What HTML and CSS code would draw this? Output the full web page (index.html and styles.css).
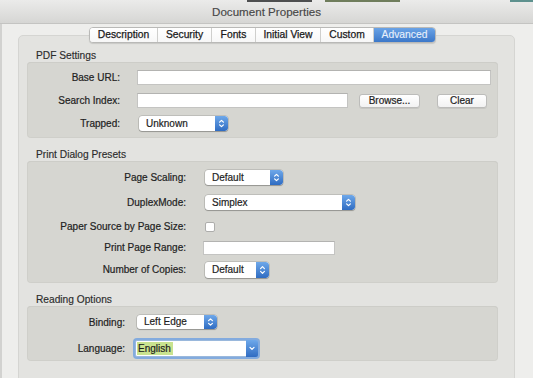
FILE: index.html
```html
<!DOCTYPE html>
<html>
<head>
<meta charset="utf-8">
<link rel="stylesheet" href="styles.css">
</head>
<body>
<div class="window">
  <div class="titlebar">
    <div class="backdrop">
      <span class="bd bd-clear1"></span><span class="bd bd-dark"></span><span class="bd bd-clear2"></span><span class="bd bd-green"></span><span class="bd bd-clear3"></span><span class="bd bd-teal"></span>
    </div>
    <div class="title">Document Properties</div>
  </div>
  <div class="content">
    <div class="tabs">
      <div class="seg seg-desc">Description</div>
      <div class="seg seg-sec">Security</div>
      <div class="seg seg-fonts">Fonts</div>
      <div class="seg seg-init">Initial View</div>
      <div class="seg seg-custom">Custom</div>
      <div class="seg seg-adv active">Advanced</div>
    </div>
    <div class="panel">
      <div class="sec-title first">PDF Settings</div>
      <div class="section s1">
        <div class="row r15">
          <div class="label l1">Base URL:</div>
          <div class="input in-base"></div>
        </div>
        <div class="row r15">
          <div class="label l1">Search Index:</div>
          <div class="input in-search"></div>
          <div class="button btn-browse">Browse...</div>
          <div class="button btn-clear">Clear</div>
        </div>
        <div class="row r15">
          <div class="label l1">Trapped:</div>
          <div class="select sel-trapped"><span class="sel-text">Unknown</span><span class="stepper"><svg width="13" height="15" viewBox="0 0 13 15"><path d="M4.6 6.2 L6.5 4.3 L8.4 6.2 M4.6 8.8 L6.5 10.7 L8.4 8.8" fill="none" stroke="#fff" stroke-width="1.2" stroke-linecap="round" stroke-linejoin="round"/></svg></span></div>
        </div>
      </div>

      <div class="sec-title">Print Dialog Presets</div>
      <div class="section s2">
        <div class="row h25">
          <div class="label l2">Page Scaling:</div>
          <div class="select sel-scaling"><span class="sel-text">Default</span><span class="stepper"><svg width="13" height="15" viewBox="0 0 13 15"><path d="M4.6 6.2 L6.5 4.3 L8.4 6.2 M4.6 8.8 L6.5 10.7 L8.4 8.8" fill="none" stroke="#fff" stroke-width="1.2" stroke-linecap="round" stroke-linejoin="round"/></svg></span></div>
        </div>
        <div class="row h25">
          <div class="label l2">DuplexMode:</div>
          <div class="select sel-duplex"><span class="sel-text">Simplex</span><span class="stepper"><svg width="13" height="15" viewBox="0 0 13 15"><path d="M4.6 6.2 L6.5 4.3 L8.4 6.2 M4.6 8.8 L6.5 10.7 L8.4 8.8" fill="none" stroke="#fff" stroke-width="1.2" stroke-linecap="round" stroke-linejoin="round"/></svg></span></div>
        </div>
        <div class="row h23">
          <div class="label l2">Paper Source by Page Size:</div>
          <div class="checkbox"></div>
        </div>
        <div class="row h19">
          <div class="label l2">Print Page Range:</div>
          <div class="input in-range"></div>
        </div>
        <div class="row h25">
          <div class="label l2">Number of Copies:</div>
          <div class="select sel-copies"><span class="sel-text">Default</span><span class="stepper"><svg width="13" height="16" viewBox="0 0 13 16"><path d="M4.6 6.6 L6.5 4.7 L8.4 6.6 M4.6 9.4 L6.5 11.3 L8.4 9.4" fill="none" stroke="#fff" stroke-width="1.2" stroke-linecap="round" stroke-linejoin="round"/></svg></span></div>
        </div>
      </div>

      <div class="sec-title">Reading Options</div>
      <div class="section s3">
        <div class="row r16">
          <div class="label l3">Binding:</div>
          <div class="select sel-binding"><span class="sel-text">Left Edge</span><span class="stepper"><svg width="13" height="14" viewBox="0 0 13 14"><path d="M4.6 5.7 L6.5 3.8 L8.4 5.7 M4.6 8.3 L6.5 10.2 L8.4 8.3" fill="none" stroke="#fff" stroke-width="1.2" stroke-linecap="round" stroke-linejoin="round"/></svg></span></div>
        </div>
        <div class="row r20">
          <div class="label l3">Language:</div>
          <div class="combo"><span class="combo-text"><span class="hl">English</span></span><span class="combo-btn"><svg width="12" height="17" viewBox="0 0 12 17"><path d="M4 7.4 L6 9.4 L8 7.4" fill="none" stroke="#fff" stroke-width="1.3" stroke-linecap="round" stroke-linejoin="round"/></svg></span></div>
        </div>
      </div>
    </div>
  </div>
</div>
</body>
</html>
```
FILE: styles.css
```css
* { box-sizing: border-box; }
html, body { margin: 0; padding: 0; }
body {
  width: 533px;
  height: 378px;
  overflow: hidden;
  background: #ededeb;
  font-family: "Liberation Sans", Arial, sans-serif;
  color: #262626;
}
.window {
  width: 533px;
  height: 378px;
  display: flex;
  flex-direction: column;
  overflow: hidden;
}
.titlebar {
  position: relative;
  height: 24px;
  flex: none;
  background: linear-gradient(#ebebea, #d6d6d4);
  border-bottom: 1px solid #c4c4c2;
  display: flex;
  align-items: center;
  justify-content: center;
}
.backdrop {
  position: absolute;
  left: 0;
  top: 0;
  width: 533px;
  height: 2px;
  display: flex;
}
.bd { height: 2px; display: block; }
.bd-clear1 { width: 247px; }
.bd-dark { width: 65px; background: #4e4f50; }
.bd-clear2 { width: 13px; }
.bd-green { width: 75px; background: #6f7d5c; }
.bd-clear3 { width: 110px; }
.bd-teal { width: 23px; background: #5e918e; }
.title {
  font-size: 11.6px;
  color: #474747;
  line-height: 14px;
  margin-top: 1px;
  -webkit-text-stroke: 0.15px #474747;
}
.content {
  flex: 1;
  min-height: 0;
  background: #eeeeec;
  box-shadow: inset 2px 0 0 #d2d2d0;
  display: flex;
  flex-direction: column;
}
.tabs {
  position: relative;
  z-index: 1;
  margin-top: 3px;
  margin-left: 89px;
  width: 347px;
  height: 16px;
  flex: none;
  display: flex;
  background: #fff;
  border: 1px solid #b9b9b7;
  border-radius: 4px;
  box-shadow: 0 1px 1px rgba(0,0,0,0.12);
  overflow: hidden;
}
.seg {
  font-size: 10.3px;
  line-height: 14px;
  text-align: center;
  color: #1a1a1a;
  -webkit-text-stroke: 0.25px #1a1a1a;
  border-right: 1px solid #cfcfcd;
  background: linear-gradient(#ffffff, #f7f7f7);
}
.seg-desc { width: 68px; }
.seg-sec { width: 54px; }
.seg-fonts { width: 44px; }
.seg-init { width: 65px; }
.seg-custom { width: 53px; }
.seg-adv { flex: 1; border-right: none; }
.seg.active {
  background: linear-gradient(#6aa3e6, #3c78c9);
  color: #e9f1fb;
  -webkit-text-stroke: 0.1px #e9f1fb;
}
.panel {
  margin: -8px 18px 0 18px;
  flex: none;
  height: 400px;
  background: #e3e3e0;
  border: 1px solid #d5d5d2;
  border-radius: 5px;
  padding: 13px 16px 0 8px;
}
.sec-title {
  font-size: 10.2px;
  line-height: 13px;
  padding-left: 9px;
  color: #2c2c2c;
  -webkit-text-stroke: 0.15px #2c2c2c;
  margin-top: 10px;
}
.sec-title.first { margin-top: 0; }
.section {
  background: #d6d6d1;
  border-radius: 4px;
  box-shadow: inset 0 1px 0 #cdcdc8, inset 0 0 0 1px rgba(0,0,0,0.03);
  display: flex;
  flex-direction: column;
}
.s1 { padding: 8px 0 7px 0; gap: 8px; }
.s2 { padding: 4px 0 1px 0; }
.s3 { padding: 8px 0 3px 0; gap: 8px; }
.row { display: flex; align-items: center; }
.r15 { height: 15px; }
.r16 { height: 16px; }
.r20 { height: 20px; }
.h25 { height: 25px; }
.h23 { height: 23px; }
.h19 { height: 19px; }
.label {
  font-size: 10px;
  text-align: right;
  flex: none;
  color: #222;
  -webkit-text-stroke: 0.2px #222;
  white-space: nowrap;
}
.l1 { width: 93px; }
.l2 { width: 159px; }
.l3 { width: 98px; }
.input {
  height: 15px;
  background: #fff;
  border: 1px solid #c4c4c2;
  border-top-color: #b3b3b1;
  flex: none;
}
.in-base { margin-left: 17px; width: 354px; }
.in-search { margin-left: 17px; width: 211px; }
.in-range { margin-left: 17px; width: 132px; height: 14px; }
.button {
  height: 14px;
  font-size: 10px;
  line-height: 12px;
  text-align: center;
  color: #222;
  -webkit-text-stroke: 0.2px #222;
  background: linear-gradient(#ffffff, #f2f2f2);
  border: 1px solid #bcbcba;
  border-radius: 3px;
  box-shadow: 0 1px 0 rgba(0,0,0,0.07);
  flex: none;
}
.btn-browse { margin-left: 11px; width: 61px; }
.btn-clear { margin-left: 17px; width: 50px; }
.select {
  display: flex;
  flex: none;
  height: 15px;
  background: #fff;
  border-radius: 3px;
  box-shadow: 0 0 0 0.5px rgba(0,0,0,0.22), 0 1px 1px rgba(0,0,0,0.22);
  overflow: hidden;
}
.sel-text {
  flex: 1;
  font-size: 10px;
  line-height: 15px;
  padding-left: 7px;
  color: #1e1e1e;
  -webkit-text-stroke: 0.2px #1e1e1e;
}
.stepper {
  width: 13px;
  flex: none;
  display: flex;
  align-items: center;
  justify-content: center;
  background: linear-gradient(#6ea8ea, #2f6cc2);
  border-radius: 0 3px 3px 0;
}
.stepper svg { display: block; }
.sel-trapped { margin-left: 19px; width: 89px; }
.sel-scaling { margin-left: 19px; width: 78px; }
.sel-duplex { margin-left: 19px; width: 150px; }
.sel-copies { margin-left: 19px; width: 64px; height: 16px; }
.sel-copies .sel-text { line-height: 16px; }
.sel-binding { margin-left: 12px; width: 80px; height: 14px; }
.sel-binding .sel-text { line-height: 14px; }
.checkbox {
  margin-left: 19px;
  width: 10px;
  height: 10px;
  background: #fff;
  border: 1px solid #adadab;
  border-radius: 2px;
  flex: none;
}
.combo {
  margin-left: 10px;
  width: 123px;
  height: 17px;
  display: flex;
  flex: none;
  background: #fff;
  border: 1px solid #9ab8dc;
  border-radius: 2px;
  box-shadow: 0 0 0 2px rgba(110,160,225,0.8);
}
.combo-text {
  flex: 1;
  font-size: 10px;
  line-height: 15px;
  padding-left: 1px;
  color: #1e1e1e;
  -webkit-text-stroke: 0.2px #1e1e1e;
}
.hl {
  background: #c9e38f;
  padding: 1px 2px 1px 1px;
}
.combo-btn {
  width: 12px;
  flex: none;
  margin: -1px -1px -1px 0;
  background: linear-gradient(#6ea8ea, #2f6cc2);
  border-radius: 0 2px 2px 0;
  display: flex;
  align-items: center;
  justify-content: center;
}
```
